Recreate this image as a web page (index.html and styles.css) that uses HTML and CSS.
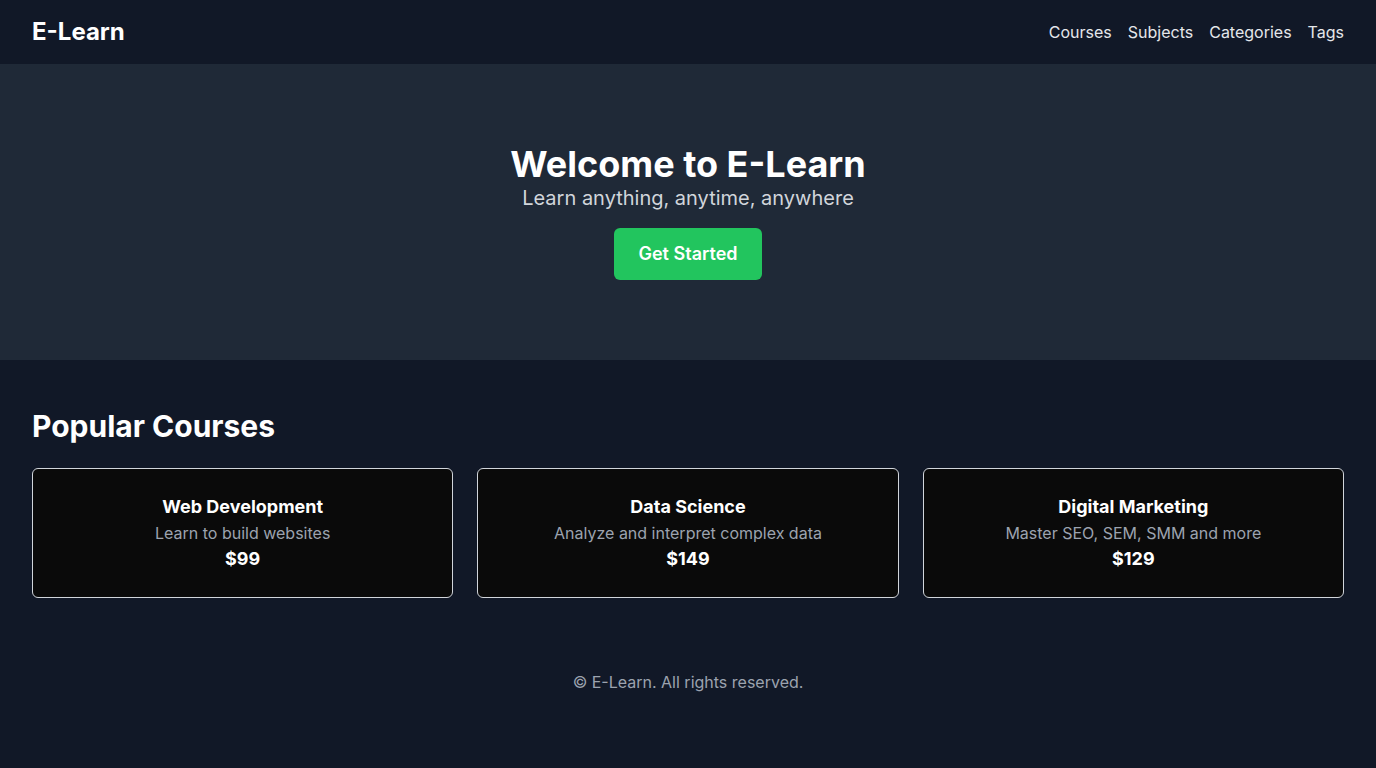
FILE: index.html
```html
<!DOCTYPE html>
<html lang="en">
<head>
<meta charset="utf-8">
<title>E-Learn</title>
<link rel="stylesheet" href="styles.css">
</head>
<body>
<header class="header">
  <div class="logo">E-Learn</div>
  <nav class="nav">
    <a href="#">Courses</a>
    <a href="#">Subjects</a>
    <a href="#">Categories</a>
    <a href="#">Tags</a>
  </nav>
</header>
<section class="hero">
  <h1 class="hero-title">Welcome to E-Learn</h1>
  <p class="hero-sub">Learn anything, anytime, anywhere</p>
  <a class="btn" href="#">Get Started</a>
</section>
<main class="courses">
  <h2 class="section-title">Popular Courses</h2>
  <div class="grid">
    <div class="card">
      <h3 class="card-title">Web Development</h3>
      <p class="card-desc">Learn to build websites</p>
      <p class="card-price">$99</p>
    </div>
    <div class="card">
      <h3 class="card-title">Data Science</h3>
      <p class="card-desc">Analyze and interpret complex data</p>
      <p class="card-price">$149</p>
    </div>
    <div class="card">
      <h3 class="card-title">Digital Marketing</h3>
      <p class="card-desc">Master SEO, SEM, SMM and more</p>
      <p class="card-price">$129</p>
    </div>
  </div>
</main>
<footer class="footer">© E-Learn. All rights reserved.</footer>
</body>
</html>
```
FILE: styles.css
```css
* { box-sizing: border-box; }
html, body { margin: 0; padding: 0; }
body {
  background: #111827;
  color: #fff;
  font-family: Inter, "Noto Sans", sans-serif;
  font-size: 16px;
  line-height: 24px;
  min-height: 768px;
}
h1, h2, h3, p { margin: 0; }
.header {
  height: 64px;
  padding: 0 32px;
  display: flex;
  align-items: center;
  justify-content: space-between;
  background: #111827;
}
.logo {
  font-size: 24px;
  line-height: 32px;
  font-weight: 700;
  color: #fff;
}
.nav { display: flex; gap: 16px; }
.nav a {
  color: #e5e7eb;
  text-decoration: none;
  font-size: 16px;
  line-height: 24px;
}
.hero {
  background: #1f2937;
  padding: 80px 32px;
  display: flex;
  flex-direction: column;
  align-items: center;
  text-align: center;
}
.hero-title {
  font-size: 36px;
  line-height: 40px;
  font-weight: 700;
  color: #fff;
}
.hero-sub {
  font-size: 20px;
  line-height: 28px;
  color: #d1d5db;
}
.btn {
  margin-top: 16px;
  background: #22c55e;
  color: #fff;
  text-decoration: none;
  font-size: 18px;
  line-height: 28px;
  font-weight: 600;
  padding: 12px 24px;
  border-radius: 6px;
}
.courses { padding: 48px 32px; }
.section-title {
  font-size: 30px;
  line-height: 36px;
  font-weight: 700;
  margin-bottom: 24px;
}
.grid {
  display: grid;
  grid-template-columns: repeat(3, 1fr);
  gap: 24px;
}
.card {
  background: #0a0a0a;
  border: 1px solid #d1d5db;
  border-radius: 6px;
  padding: 24px;
  text-align: center;
}
.card-title {
  font-size: 18px;
  line-height: 28px;
  font-weight: 700;
}
.card-desc { color: #9ca3af; }
.card-price {
  font-size: 18px;
  line-height: 28px;
  font-weight: 700;
}
.footer {
  padding: 24px 32px;
  text-align: center;
  color: #9ca3af;
}
```
